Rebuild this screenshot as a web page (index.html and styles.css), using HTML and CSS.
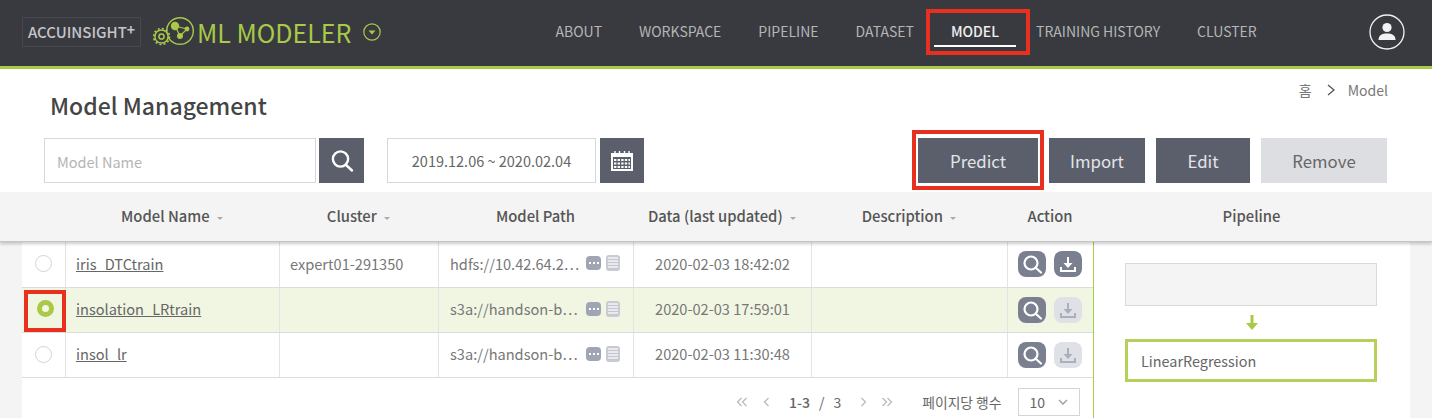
FILE: index.html
```html
<!DOCTYPE html>
<html lang="en">
<head>
    <meta charset="UTF-8">
    <title>Model Management</title>
    <link rel="stylesheet" href="styles.css">
</head>
<body>
    <header class="topbar">
        <div class="brand">
            <span class="brand-box">ACCUINSIGHT<sup>+</sup></span>
            <svg class="brand-logo" viewBox="0 0 42 32" width="42" height="32" fill="none" stroke="#a9c947">
                <circle cx="27" cy="15" r="13.3" stroke-width="1.4"/>
                <circle cx="8.5" cy="20.5" r="6.6" stroke-width="1.5" fill="#383a3f"/>
                <circle cx="8.5" cy="20.5" r="8" stroke-width="1.6" stroke-dasharray="2 2.2"/>
                <circle cx="8.5" cy="20.5" r="2.6" stroke-width="1.5"/>
                <path d="M22 10 L34 13 L27 20 Z" stroke-width="1.2"/>
                <circle cx="22" cy="10" r="4.2" fill="#a9c947" stroke="none"/>
                <circle cx="34" cy="13" r="2.4" fill="#a9c947" stroke="none"/>
                <circle cx="27" cy="20" r="3" fill="#a9c947" stroke="none"/>
            </svg>
            <span class="brand-name">ML MODELER</span>
            <svg class="brand-caret" viewBox="0 0 18 18" width="18" height="18">
                <circle cx="9" cy="9" r="8.2" fill="none" stroke="#a9c947" stroke-width="1.2"/>
                <path d="M5.5 7.5 H12.5 L9 11.5 Z" fill="#a9c947"/>
            </svg>
        </div>
        <nav class="nav">
            <a>ABOUT</a>
            <a>WORKSPACE</a>
            <a>PIPELINE</a>
            <a>DATASET</a>
            <a class="active">MODEL</a>
            <a>TRAINING HISTORY</a>
            <a>CLUSTER</a>
        </nav>
        <svg class="avatar" viewBox="0 0 36 36" width="36" height="36">
            <circle cx="18" cy="18" r="17" fill="none" stroke="#f2f2f2" stroke-width="1.3"/>
            <circle cx="18" cy="13.5" r="4.6" fill="#f2f2f2"/>
            <path d="M9.5 26 C9.5 21 13 19.5 18 19.5 C23 19.5 26.5 21 26.5 26 Z" fill="#f2f2f2"/>
        </svg>
    </header>

    <section class="page-head">
        <div class="title-row">
            <h1>Model Management</h1>
            <div class="crumbs">
                <span>홈</span>
                <svg viewBox="0 0 10 12" width="10" height="12" fill="none" stroke="#555" stroke-width="1.3"><path d="M2 1 L8 6 L2 11"/></svg>
                <span>Model</span>
            </div>
        </div>
        <div class="toolbar">
            <div class="search-box">Model Name</div>
            <button class="btn-icon search-btn">
                <svg viewBox="0 0 26 26" width="26" height="26" fill="none" stroke="#fff" stroke-width="2.4"><circle cx="11.5" cy="11" r="7.6"/><path d="M17 17 L23 22.5" stroke-linecap="round"/></svg>
            </button>
            <div class="date-box">2019.12.06 ~ 2020.02.04</div>
            <button class="btn-icon cal-btn">
                <svg viewBox="0 0 24 22" width="24" height="22"><path d="M1 3 H23 V21 H1 Z" fill="#fff"/><path d="M5 1 V4 M9.5 1 V4 M14.5 1 V4 M19 1 V4" stroke="#fff" stroke-width="1.4"/><path d="M3 7 H21 V19 H3 Z" fill="#5a5f6b"/><path d="M4 10 H20 M4 13.5 H20 M4 17 H20" stroke="#fff" stroke-width="2" stroke-dasharray="2.4 1.2"/></svg>
            </button>
            <div class="actions">
                <button class="btn predict">Predict</button>
                <button class="btn import">Import</button>
                <button class="btn edit">Edit</button>
                <button class="btn btn-off remove">Remove</button>
            </div>
        </div>
    </section>

    <div class="table-head">
        <div class="col-radio"></div>
        <div class="col-name">Model Name <i class="sort"></i></div>
        <div class="col-cluster">Cluster <i class="sort"></i></div>
        <div class="col-path">Model Path</div>
        <div class="col-date">Data (last updated) <i class="sort"></i></div>
        <div class="col-desc">Description <i class="sort"></i></div>
        <div class="col-action">Action</div>
        <div class="col-pipeline">Pipeline</div>
    </div>

    <main class="content">
        <div class="list">
            <div class="row">
                <div class="col-radio"><span class="radio"></span></div>
                <div class="col-name cell"><a>iris_DTCtrain</a></div>
                <div class="col-cluster cell">expert01-291350</div>
                <div class="col-path cell"><span class="path">hdfs://10.42.64.2⋯</span><span class="more"><b></b><b></b><b></b></span><span class="doc"></span></div>
                <div class="col-date cell center">2020-02-03 18:42:02</div>
                <div class="col-desc cell"></div>
                <div class="col-action cell">
                    <span class="act"><svg viewBox="0 0 28 26" width="28" height="26" fill="none" stroke="#fff" stroke-width="2.2"><circle cx="13" cy="12" r="6.5"/><path d="M18 17 L23 21.5" stroke-linecap="round"/></svg></span>
                    <span class="act"><svg viewBox="0 0 28 26" width="28" height="26" fill="none" stroke="#fff" stroke-width="2"><path d="M14 6 V15"/><path d="M9.5 12 H18.5 L14 17 Z" fill="#fff" stroke="none"/><path d="M7 16 V20 H21 V16"/></svg></span>
                </div>
            </div>
            <div class="row selected">
                <div class="col-radio mark"><span class="radio on"></span></div>
                <div class="col-name cell"><a>insolation_LRtrain</a></div>
                <div class="col-cluster cell"></div>
                <div class="col-path cell"><span class="path">s3a://handson-b⋯</span><span class="more"><b></b><b></b><b></b></span><span class="doc"></span></div>
                <div class="col-date cell center">2020-02-03 17:59:01</div>
                <div class="col-desc cell"></div>
                <div class="col-action cell">
                    <span class="act"><svg viewBox="0 0 28 26" width="28" height="26" fill="none" stroke="#fff" stroke-width="2.2"><circle cx="13" cy="12" r="6.5"/><path d="M18 17 L23 21.5" stroke-linecap="round"/></svg></span>
                    <span class="act off"><svg viewBox="0 0 28 26" width="28" height="26" fill="none" stroke="#aab0bb" stroke-width="2"><path d="M14 6 V15"/><path d="M9.5 12 H18.5 L14 17 Z" fill="#aab0bb" stroke="none"/><path d="M7 16 V20 H21 V16"/></svg></span>
                </div>
            </div>
            <div class="row">
                <div class="col-radio"><span class="radio"></span></div>
                <div class="col-name cell"><a>insol_lr</a></div>
                <div class="col-cluster cell"></div>
                <div class="col-path cell"><span class="path">s3a://handson-b⋯</span><span class="more"><b></b><b></b><b></b></span><span class="doc"></span></div>
                <div class="col-date cell center">2020-02-03 11:30:48</div>
                <div class="col-desc cell"></div>
                <div class="col-action cell">
                    <span class="act"><svg viewBox="0 0 28 26" width="28" height="26" fill="none" stroke="#fff" stroke-width="2.2"><circle cx="13" cy="12" r="6.5"/><path d="M18 17 L23 21.5" stroke-linecap="round"/></svg></span>
                    <span class="act off"><svg viewBox="0 0 28 26" width="28" height="26" fill="none" stroke="#aab0bb" stroke-width="2"><path d="M14 6 V15"/><path d="M9.5 12 H18.5 L14 17 Z" fill="#aab0bb" stroke="none"/><path d="M7 16 V20 H21 V16"/></svg></span>
                </div>
            </div>
            <div class="pager">
                <svg viewBox="0 0 12 10" width="12" height="10" fill="none" stroke="#bbb" stroke-width="1.3"><path d="M5.5 1 L1.5 5 L5.5 9 M10.5 1 L6.5 5 L10.5 9"/></svg>
                <svg class="pg-prev" viewBox="0 0 7 10" width="7" height="10" fill="none" stroke="#bbb" stroke-width="1.3"><path d="M5.5 1 L1.5 5 L5.5 9"/></svg>
                <span class="pg-count"><b>1-3</b><span>/</span><span>3</span></span>
                <svg class="pg-next" viewBox="0 0 7 10" width="7" height="10" fill="none" stroke="#bbb" stroke-width="1.3"><path d="M1.5 1 L5.5 5 L1.5 9"/></svg>
                <svg class="pg-last" viewBox="0 0 12 10" width="12" height="10" fill="none" stroke="#bbb" stroke-width="1.3"><path d="M1.5 1 L5.5 5 L1.5 9 M6.5 1 L10.5 5 L6.5 9"/></svg>
                <span class="pg-label">페이지당 행수</span>
                <div class="pg-select">
                    <span>10</span>
                    <svg viewBox="0 0 10 6" width="10" height="6" fill="none" stroke="#999" stroke-width="1.3"><path d="M1 1 L5 5 L9 1"/></svg>
                </div>
            </div>
        </div>
        <aside class="pipeline">
            <div class="node"></div>
            <svg class="node-arrow" viewBox="0 0 14 16" width="14" height="16"><path d="M5.5 0 H8.5 V8 H13 L7 15 L1 8 H5.5 Z" fill="#a9c947"/></svg>
            <div class="node current">LinearRegression</div>
        </aside>
    </main>
</body>
</html>
```

FILE: styles.css
```css
*, *::before, *::after {
    box-sizing: border-box;
}
html, body {
    height: 418px;
    margin: 0;
    overflow: hidden;
}
body {
    display: flex;
    flex-direction: column;
    font-family: "Noto Sans CJK KR", "Noto Sans", sans-serif;
    font-size: 13px;
    color: #666;
    background: #fff;
}
button {
    font-family: inherit;
    border: none;
    cursor: pointer;
}

/* annotation boxes */
.mark {
    outline: 4px solid #e8301f;
}

/* top bar */
.topbar {
    display: flex;
    align-items: center;
    height: 69px;
    flex: none;
    padding: 0 27px 2px 22px;
    background: #383a3f;
    border-bottom: 3px solid #a9c947;
}
.brand {
    display: flex;
    align-items: center;
}
.brand-box {
    width: 119px;
    height: 30px;
    border: 1px solid #45484e;
    font-size: 15px;
    font-weight: 500;
    line-height: 28px;
    text-align: center;
    color: #c4c5c7;
    white-space: nowrap;
}
.brand-box sup {
    font-size: 14px;
    font-weight: 700;
    line-height: 0;
    vertical-align: 3px;
}
.brand-logo {
    margin-left: 12px;
}
.brand-name {
    margin-left: 2px;
    font-size: 25px;
    line-height: 30px;
    color: #a9c947;
    white-space: nowrap;
}
.brand-caret {
    margin-left: 12px;
}
.nav {
    display: flex;
    gap: 37px;
    margin: 0 0 3px 174px;
    font-size: 14px;
    color: #b4b5b7;
    white-space: nowrap;
}
.nav a {
    position: relative;
    line-height: 24px;
}
.nav .active {
    color: #f0f0f0;
    font-weight: 500;
}
/* white underline and red annotation on the current tab */
.nav .active::before {
    content: "";
    position: absolute;
    left: -17px;
    right: -17px;
    top: 26px;
    height: 2px;
    background: #fff;
}
.nav .active::after {
    content: "";
    position: absolute;
    left: -25px;
    right: -31px;
    top: -10px;
    height: 46px;
    border: 4px solid #e8301f;
}
.avatar {
    margin-left: auto;
}

/* title and search row */
.page-head {
    flex: none;
    height: 123px;
    padding: 0 45px 0 44px;
}
.title-row {
    display: flex;
    justify-content: space-between;
    height: 69px;
}
.title-row h1 {
    margin: 20px 0 0 6px;
    font-size: 23px;
    font-weight: 500;
    line-height: 32px;
    color: #444;
}
.crumbs {
    display: flex;
    align-items: center;
    gap: 12px;
    height: 20px;
    margin: 11px -1px 0 0;
    font-size: 14px;
    color: #777;
}
.crumbs span:first-child {
    margin-right: 2px;
}
.toolbar {
    display: flex;
    height: 45px;
}
.search-box, .date-box {
    height: 45px;
    border: 1px solid #d8d8d8;
    line-height: 45px;
}
.search-box {
    width: 272px;
    padding-left: 12px;
    font-size: 14.5px;
    color: #b5b5b5;
}
.date-box {
    width: 209px;
    margin-left: 23px;
    font-size: 14.5px;
    line-height: 43px;
    text-align: center;
    color: #666;
}
.btn-icon {
    display: flex;
    align-items: center;
    justify-content: center;
    width: 45px;
    height: 45px;
    padding: 0;
    margin-left: 3px;
    background: #5a5f6b;
}
.cal-btn {
    width: 44px;
    margin-left: 4px;
}
.actions {
    display: flex;
    gap: 11px;
    margin-left: auto;
}
.btn {
    height: 45px;
    padding: 0;
    font-size: 16.8px;
    color: #e4e5e8;
    background: #5a5f6b;
}
.btn-off {
    color: #666;
    background: #dcdee2;
}
.predict {
    position: relative;
    width: 120px;
}
.predict::after {
    content: "";
    position: absolute;
    left: -6px;
    right: -6px;
    top: -8px;
    bottom: -7px;
    border: 4px solid #e8301f;
}
.import {
    width: 96px;
}
.edit {
    width: 94px;
}
.remove {
    width: 126px;
}

/* column sizes */
.col-radio {
    width: 43px;
}
.col-name {
    width: 214px;
}
.col-cluster {
    width: 159px;
}
.col-path {
    width: 195px;
}
.col-date {
    width: 178px;
}
.col-desc {
    width: 196px;
}
.col-action {
    width: 86px;
}

/* table header */
.table-head {
    position: relative;
    display: flex;
    flex: none;
    align-items: center;
    height: 50px;
    padding-left: 22px;
    padding-bottom: 3px;
    font-size: 14.8px;
    font-weight: 500;
    color: #555;
    background: #f4f4f4;
    border-bottom: 1px solid #c4c4c4;
    box-shadow: 0 2px 3px rgba(0, 0, 0, 0.2);
}
.table-head > div {
    text-align: center;
}
.col-pipeline {
    width: 317px;
}
.sort {
    display: inline-block;
    margin-left: 4px;
    vertical-align: 2px;
    border-left: 3px solid transparent;
    border-right: 3px solid transparent;
    border-top: 3px solid #aaa;
}

/* table body */
.content {
    display: flex;
    flex: 1;
    margin: 0 22px;
    box-shadow: 0 0 0 22px #f4f4f4;
}
.list {
    width: 1071px;
}
.row {
    display: flex;
    height: 45px;
    border-bottom: 1px solid #dcdcdc;
}
.row:first-child {
    height: 46px;
}
.row.selected {
    background: #f1f6e3;
}
.row > div {
    display: flex;
    align-items: center;
}
.cell {
    padding: 0 10px 3px;
    border-left: 1px solid #e4e4e4;
    font-size: 14.6px;
    color: #777;
}
.cell.center {
    justify-content: center;
}
.cell a {
    color: #666;
    text-decoration: underline;
}
.col-radio {
    justify-content: center;
}
.col-radio.mark {
    position: relative;
    z-index: 1;
    outline-offset: -4px;
    width: 42px;
    margin: 2px -1px 0 2px;
    padding-bottom: 3px;
    height: 42px;
}
.radio {
    width: 17px;
    height: 17px;
    margin-bottom: 2px;
    border: 1px solid #d4d4d4;
    border-radius: 50%;
    background: #fff;
}
.radio.on {
    border: 5px solid #a9c947;
    background: #f4f8e6;
}
.col-path.cell {
    padding: 0 0 3px 11px;
    white-space: nowrap;
}
.path {
    width: 136px;
    overflow: hidden;
}
.more {
    display: flex;
    align-items: center;
    justify-content: center;
    gap: 2px;
    width: 15px;
    height: 14px;
    border-radius: 4px;
    background: #a0a5b4;
}
.more b {
    width: 2px;
    height: 2px;
    background: #fff;
}
.doc {
    width: 14px;
    height: 16px;
    margin-left: 5px;
    border: 2px solid #c8cbd3;
    border-radius: 3px;
    background: repeating-linear-gradient(#e9eaed 0 2px, #c4c7cf 2px 3px);
}
.col-action.cell {
    gap: 8px;
    padding: 0 0 1px 10px;
}
.act {
    display: flex;
    width: 28px;
    height: 26px;
    border-radius: 8px;
    background: #7a8090;
}
.act.off {
    background: #dfe1e6;
}

/* pagination */
.pager {
    display: flex;
    align-items: center;
    height: 41px;
    padding: 6px 0 0 714px;
    font-size: 14px;
    color: #666;
}
.pg-prev {
    margin-left: 15px;
}
.pg-count {
    display: flex;
    gap: 9px;
    margin-left: 19px;
}
.pg-count b {
    font-weight: 500;
}
.pg-next {
    margin-left: 19px;
}
.pg-last {
    margin-left: 14px;
}
.pg-label {
    margin-left: 29px;
    font-size: 13.8px;
    white-space: nowrap;
}
.pg-select {
    display: flex;
    align-items: center;
    justify-content: space-between;
    width: 62px;
    height: 28px;
    margin-left: 16px;
    padding: 0 11px;
    border: 1px solid #d4d4d4;
}

/* pipeline panel */
.pipeline {
    display: flex;
    flex-direction: column;
    align-items: center;
    width: 317px;
    padding: 21px 33px 0 31px;
    border-left: 1px solid #a9c947;
}
.node {
    flex: none;
    width: 252px;
    height: 43px;
    border: 1px solid #dadada;
    background: #f4f4f4;
}
.node-arrow {
    margin: 9px 0 8px 2px;
}
.node.current {
    padding-left: 13px;
    border: 3px solid #b5d15b;
    font-size: 14.4px;
    line-height: 38px;
    color: #666;
    background: #fff;
}
```
